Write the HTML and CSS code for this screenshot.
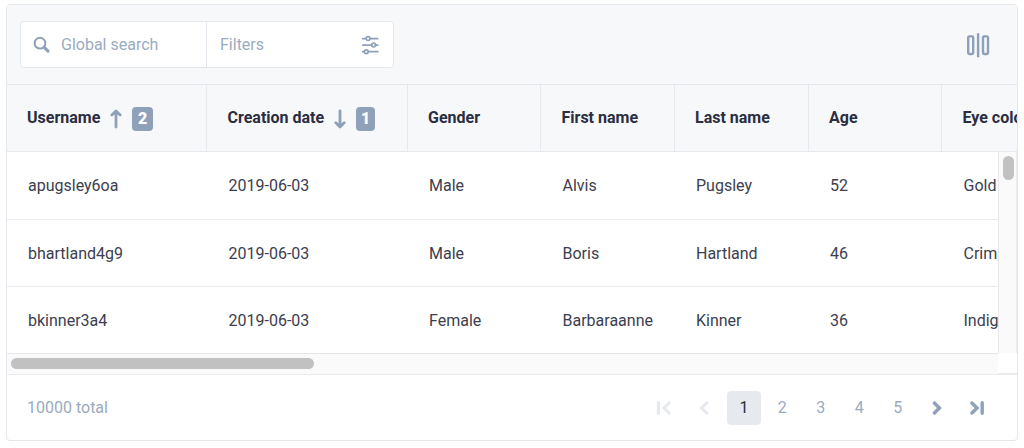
FILE: index.html
```html
<!DOCTYPE html>
<html lang="en">
<head>
<meta charset="utf-8">
<title>Users</title>
<link rel="stylesheet" href="styles.css">
</head>
<body>
<main class="card">
  <div class="toolbar">
    <div class="controls">
      <div class="search">
        <svg class="icon-search" width="18" height="18" viewBox="0 0 18 18" fill="none" stroke="currentColor" stroke-linecap="round"><circle cx="7" cy="7.2" r="5.4" stroke-width="2"/><path d="M11.5 11.6L15 15.1" stroke-width="3"/></svg>
        <span>Global search</span>
      </div>
      <div class="filters">
        <span>Filters</span>
        <svg width="18" height="20" viewBox="0 0 18 20" fill="none" stroke="currentColor" stroke-width="1.7" stroke-linecap="round"><path d="M1.7 3.6H5.2M9 3.6H16.8M1.7 10.1H10.7M14.5 10.1H16.8M1.7 16.7H3.4M7.2 16.7H16.8"/><circle cx="7.1" cy="3.6" r="1.9"/><circle cx="12.6" cy="10.1" r="1.9"/><circle cx="5.3" cy="16.7" r="1.9"/></svg>
      </div>
    </div>
    <svg class="icon-columns" width="24" height="26" viewBox="0 0 24 26" fill="none" stroke="currentColor" stroke-width="2.4"><rect x="2.2" y="4.4" width="5" height="17.6" rx="1.2"/><rect x="17" y="4.4" width="5" height="17.6" rx="1.2"/><path d="M12.1 1.2V25.2"/></svg>
  </div>
  <div class="row head">
    <div class="cell"><span>Username</span><svg class="arrow" width="12" height="20" viewBox="0 0 12 20" fill="none" stroke="currentColor" stroke-width="2.8" stroke-linecap="round" stroke-linejoin="round"><path d="M6 18V2.4M1.8 6.1L6 1.9L10.2 6.1"/></svg><b class="badge">2</b></div>
    <div class="cell"><span>Creation date</span><svg class="arrow" width="12" height="20" viewBox="0 0 12 20" fill="none" stroke="currentColor" stroke-width="2.8" stroke-linecap="round" stroke-linejoin="round"><path d="M6 1.8V17.4M1.8 13.7L6 17.9L10.2 13.7"/></svg><b class="badge narrow">1</b></div>
    <div class="cell">Gender</div>
    <div class="cell">First name</div>
    <div class="cell">Last name</div>
    <div class="cell">Age</div>
    <div class="cell">Eye color</div>
  </div>
  <div class="viewport">
    <div class="rows">
      <div class="row"><div class="cell">apugsley6oa</div><div class="cell">2019-06-03</div><div class="cell">Male</div><div class="cell">Alvis</div><div class="cell">Pugsley</div><div class="cell">52</div><div class="cell">Gold</div></div>
      <div class="row"><div class="cell">bhartland4g9</div><div class="cell">2019-06-03</div><div class="cell">Male</div><div class="cell">Boris</div><div class="cell">Hartland</div><div class="cell">46</div><div class="cell">Crimson</div></div>
      <div class="row"><div class="cell">bkinner3a4</div><div class="cell">2019-06-03</div><div class="cell">Female</div><div class="cell">Barbaraanne</div><div class="cell">Kinner</div><div class="cell">36</div><div class="cell">Indigo</div></div>
    </div>
    <div class="track-y"><div class="thumb-y"></div></div>
    <div class="track-x"><div class="thumb-x"></div></div>
  </div>
  <div class="footer">
    <span>10000 total</span>
    <nav class="pager">
      <svg class="first off" width="16" height="16" viewBox="0 0 16 16" fill="none" stroke="currentColor" stroke-width="3" stroke-linecap="round"><path d="M2.5 2.6V13.4M13.3 2.9L8 8L13.3 13.1"/></svg>
      <svg class="prev off" width="16" height="16" viewBox="0 0 16 16" fill="none" stroke="currentColor" stroke-width="3" stroke-linecap="round"><path d="M10.8 2.9L5.6 8L10.8 13.1"/></svg>
      <span class="page current">1</span>
      <span class="page">2</span>
      <span class="page">3</span>
      <span class="page">4</span>
      <span class="page">5</span>
      <svg class="next" width="16" height="16" viewBox="0 0 16 16" fill="none" stroke="currentColor" stroke-width="3.4" stroke-linecap="round"><path d="M5.4 3L10.4 8L5.4 13"/></svg>
      <svg class="last" width="16" height="16" viewBox="0 0 16 16" fill="none" stroke="currentColor" stroke-width="3.4" stroke-linecap="round"><path d="M2.9 3L8 8L2.9 13M13.2 2.8V13.2"/></svg>
    </nav>
  </div>
</main>
</body>
</html>
```
FILE: styles.css
```css
* { box-sizing: border-box; }
body {
  margin: 0;
  padding: 4px 6px;
  background: #fff;
  font: 16px/20px Roboto, "Liberation Sans", sans-serif;
  color: #3c3e4f;
}
svg { display: block; flex: none; }
.card {
  width: 1012px;
  height: 437px;
  border: 1px solid #e4e8ee;
  border-radius: 4px;
  overflow: hidden;
  color: #8fa1b8;
}
.toolbar {
  display: flex;
  align-items: flex-start;
  justify-content: space-between;
  height: 80px;
  padding: 16px 27px 0 13px;
  background: #f6f8fa;
  border-bottom: 1px solid #e6e9ed;
}
.controls {
  display: flex;
  width: 374px;
  height: 47px;
  background: #fff;
  border: 1px solid #e4e8ee;
  border-radius: 4px;
  color: #9aabc1;
}
.search, .filters { display: flex; align-items: center; }
.search {
  width: 186px;
  padding-left: 12px;
  gap: 10px;
  border-right: 1px solid #e4e8ee;
}
.filters { flex: 1; justify-content: space-between; padding-left: 13px; padding-right: 14px; }
.controls svg { color: #8fa1b8; }
.icon-columns { margin-top: 11px; }
.row {
  display: grid;
  grid-template-columns: 200px 200.5px 133.5px 133.5px 134px 133.5px 134px;
  height: 67px;
}
.cell {
  display: flex;
  align-items: center;
  padding-left: 21.5px;
  white-space: nowrap;
}
.cell:first-child { padding-left: 21px; }
.head {
  background: #f6f8fa;
  border-bottom: 1px solid #e6e9ed;
  color: #2b2d41;
  font-weight: 700;
}
.head .cell { padding-left: 20.5px; border-right: 1px solid #e6e9ed; }
.head .cell:first-child { padding-left: 20px; }
.arrow { margin: 2px 10px 0 10px; color: #8fa1b8; }
.badge {
  width: 20.5px;
  height: 24px;
  margin-top: 2px;
  border-radius: 4px;
  background: #8fa1b8;
  color: #fff;
  line-height: 24px;
  text-align: center;
}
.badge.narrow { width: 19px; }
.viewport {
  display: grid;
  grid-template-columns: 991px 19px;
  grid-template-rows: 201px 21px;
}
.rows { overflow: hidden; color: #3c3e4f; }
.rows .row { border-bottom: 1px solid #e8ebef; height: 67px; }
.rows .row:first-child { height: 68px; }
.rows .row:not(:first-child) .cell { padding-top: 2px; }
.rows .row:last-child { border-bottom: 0; height: 66px; }
.track-y {
  padding: 4px 0 0 4px;
  background: #fafafa;
  border-left: 1px solid #e8e8ea;
  border-right: 1px solid #ededf0;
}
.thumb-y { width: 11px; height: 24px; border-radius: 6px; background: #c1c1c1; }
.track-x {
  padding: 4px 0 0 4px;
  background: #fafafa;
  border-top: 1px solid #e6e7e9;
}
.thumb-x { width: 303px; height: 11px; border-radius: 6px; background: #c1c1c1; }
.footer {
  display: flex;
  align-items: center;
  justify-content: space-between;
  height: 67px;
  margin-top: -1px;
  padding: 0 32px 0 20px;
  border-top: 2px solid #e8eaed;
  color: #9aabc1;
}
.pager { display: flex; align-items: center; }
.pager svg { color: #8fa1b8; }
.pager svg.off { color: #e6e9f0; }
.page { width: 38.5px; text-align: center; }
.page.current {
  width: 34px;
  height: 34px;
  margin: 0 2px 0 15px;
  border-radius: 4px;
  background: #e6e9ed;
  color: #2b2d41;
  line-height: 34px;
}
.prev { margin-left: 24px; }
.next { margin-left: 12px; }
.last { margin-left: 24px; }
```
